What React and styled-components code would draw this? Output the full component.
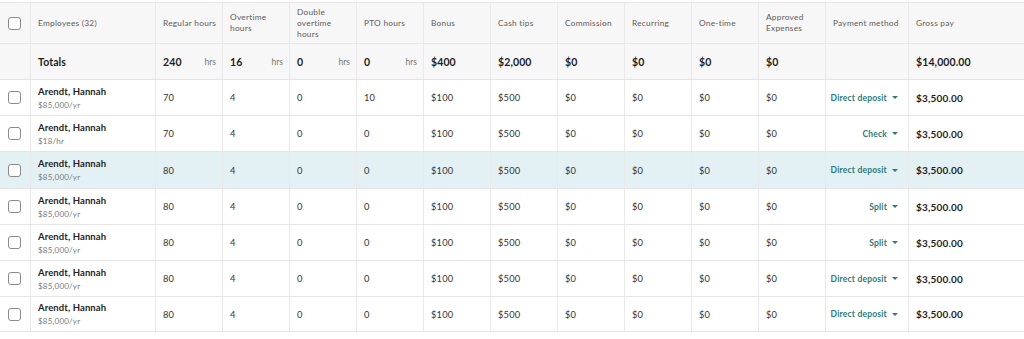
import React from "react";
import styled, { createGlobalStyle } from "styled-components";

const Global = createGlobalStyle`
  html, body { margin: 0; padding: 0; background: #ffffff; }
  body { font-family: Lato, "Noto Sans", sans-serif; color: #2b2b2b; -webkit-font-smoothing: antialiased; }
  * { box-sizing: border-box; }
`;

const Table = styled.div`
  width: 1024px;
  padding-top: 2px;
  display: flex;
  flex-direction: column;
`;

const COLS = "30px 125px repeat(10, 67px) 83px 1fr";

const Row = styled.div`
  display: grid;
  grid-template-columns: ${COLS};
  height: ${(p) => p.$h || 36}px;
  background: ${(p) => (p.$bg === "head" ? "#f8f7f7" : p.$bg === "hl" ? "#e3f1f4" : "#ffffff")};
  border-top: 1px solid #e6e4e4;
  &:last-child { border-bottom: 1px solid #e6e4e4; }
`;

const Cell = styled.div`
  display: flex;
  align-items: center;
  justify-content: ${(p) => (p.$right ? "flex-end" : p.$center ? "center" : "flex-start")};
  padding: 0 ${(p) => (p.$right ? 10 : 4)}px 0 ${(p) => (p.$center ? 3 : 7)}px;
  border-left: ${(p) => (p.$first ? "none" : "1px solid #ebe9e9")};
  min-width: 0;
  white-space: nowrap;
`;

const HeadText = styled.span`
  font-size: 8.3px;
  line-height: 11px;
  color: #5c5c5c;
  letter-spacing: 0.25px;
  white-space: normal;
`;

const TotalText = styled.span`
  font-size: 10.5px;
  font-weight: 700;
  color: #1e1e1e;
  letter-spacing: 0.1px;
`;

const Hrs = styled.span`
  margin-left: auto;
  margin-right: 2px;
  font-size: 8.5px;
  color: #777777;
`;

const Box = styled.span`
  width: 13px;
  height: 13px;
  border: 1.3px solid #8a8a8a;
  border-radius: 3px;
  background: #ffffff;
  display: inline-block;
`;

const NameStack = styled.div`
  display: flex;
  flex-direction: column;
  gap: 3px;
`;

const Name = styled.span`
  font-size: 9.5px;
  font-weight: 700;
  color: #252525;
  line-height: 11px;
  letter-spacing: 0.1px;
`;

const Rate = styled.span`
  font-size: 8px;
  color: #7a7a7a;
  line-height: 10px;
  letter-spacing: 0.2px;
`;

const Val = styled.span`
  font-size: 9.3px;
  color: #333333;
  letter-spacing: 0.2px;
`;

const Gross = styled.span`
  font-size: 10px;
  font-weight: 700;
  color: #1e1e1e;
  letter-spacing: 0.2px;
`;

const Method = styled.span`
  font-size: 8.5px;
  font-weight: 700;
  color: #2e7b78;
  display: inline-flex;
  align-items: center;
  gap: 5px;
  letter-spacing: 0.2px;
`;

const Caret = styled.span`
  width: 0;
  height: 0;
  border-left: 3px solid transparent;
  border-right: 3px solid transparent;
  border-top: 3px solid #2e7b78;
`;

const headers = [
  ["Regular hours"],
  ["Overtime", "hours"],
  ["Double", "overtime", "hours"],
  ["PTO hours"],
  ["Bonus"],
  ["Cash tips"],
  ["Commission"],
  ["Recurring"],
  ["One-time"],
  ["Approved", "Expenses"],
  ["Payment method"],
  ["Gross pay"],
];

const rows = [
  { rate: "$85,000/yr", reg: 70, pto: 10, method: "Direct deposit" },
  { rate: "$18/hr", reg: 70, pto: 0, method: "Check" },
  { rate: "$85,000/yr", reg: 80, pto: 0, method: "Direct deposit", hl: true },
  { rate: "$85,000/yr", reg: 80, pto: 0, method: "Split" },
  { rate: "$85,000/yr", reg: 80, pto: 0, method: "Split" },
  { rate: "$85,000/yr", reg: 80, pto: 0, method: "Direct deposit" },
  { rate: "$85,000/yr", reg: 80, pto: 0, method: "Direct deposit" },
];

export default function App() {
  return (
    <>
      <Global />
      <Table>
        <Row $h={41} $bg="head">
          <Cell $first $center><Box /></Cell>
          <Cell><HeadText>Employees (32)</HeadText></Cell>
          {headers.map((h, i) => (
            <Cell key={i}>
              <HeadText>
                {h.map((l, j) => (
                  <React.Fragment key={j}>
                    {j > 0 && <br />}
                    {l}
                  </React.Fragment>
                ))}
              </HeadText>
            </Cell>
          ))}
        </Row>
        <Row $h={36} $bg="head">
          <Cell $first />
          <Cell><TotalText>Totals</TotalText></Cell>
          <Cell><TotalText>240</TotalText><Hrs>hrs</Hrs></Cell>
          <Cell><TotalText>16</TotalText><Hrs>hrs</Hrs></Cell>
          <Cell><TotalText>0</TotalText><Hrs>hrs</Hrs></Cell>
          <Cell><TotalText>0</TotalText><Hrs>hrs</Hrs></Cell>
          <Cell><TotalText>$400</TotalText></Cell>
          <Cell><TotalText>$2,000</TotalText></Cell>
          <Cell><TotalText>$0</TotalText></Cell>
          <Cell><TotalText>$0</TotalText></Cell>
          <Cell><TotalText>$0</TotalText></Cell>
          <Cell><TotalText>$0</TotalText></Cell>
          <Cell />
          <Cell><TotalText>$14,000.00</TotalText></Cell>
        </Row>
        {rows.map((r, i) => (
          <Row key={i} $h={i === 2 ? 37 : 36} $bg={r.hl ? "hl" : undefined}>
            <Cell $first $center><Box /></Cell>
            <Cell>
              <NameStack>
                <Name>Arendt, Hannah</Name>
                <Rate>{r.rate}</Rate>
              </NameStack>
            </Cell>
            <Cell><Val>{r.reg}</Val></Cell>
            <Cell><Val>4</Val></Cell>
            <Cell><Val>0</Val></Cell>
            <Cell><Val>{r.pto}</Val></Cell>
            <Cell><Val>$100</Val></Cell>
            <Cell><Val>$500</Val></Cell>
            <Cell><Val>$0</Val></Cell>
            <Cell><Val>$0</Val></Cell>
            <Cell><Val>$0</Val></Cell>
            <Cell><Val>$0</Val></Cell>
            <Cell $right>
              <Method>{r.method}<Caret /></Method>
            </Cell>
            <Cell><Gross>$3,500.00</Gross></Cell>
          </Row>
        ))}
      </Table>
    </>
  );
}
